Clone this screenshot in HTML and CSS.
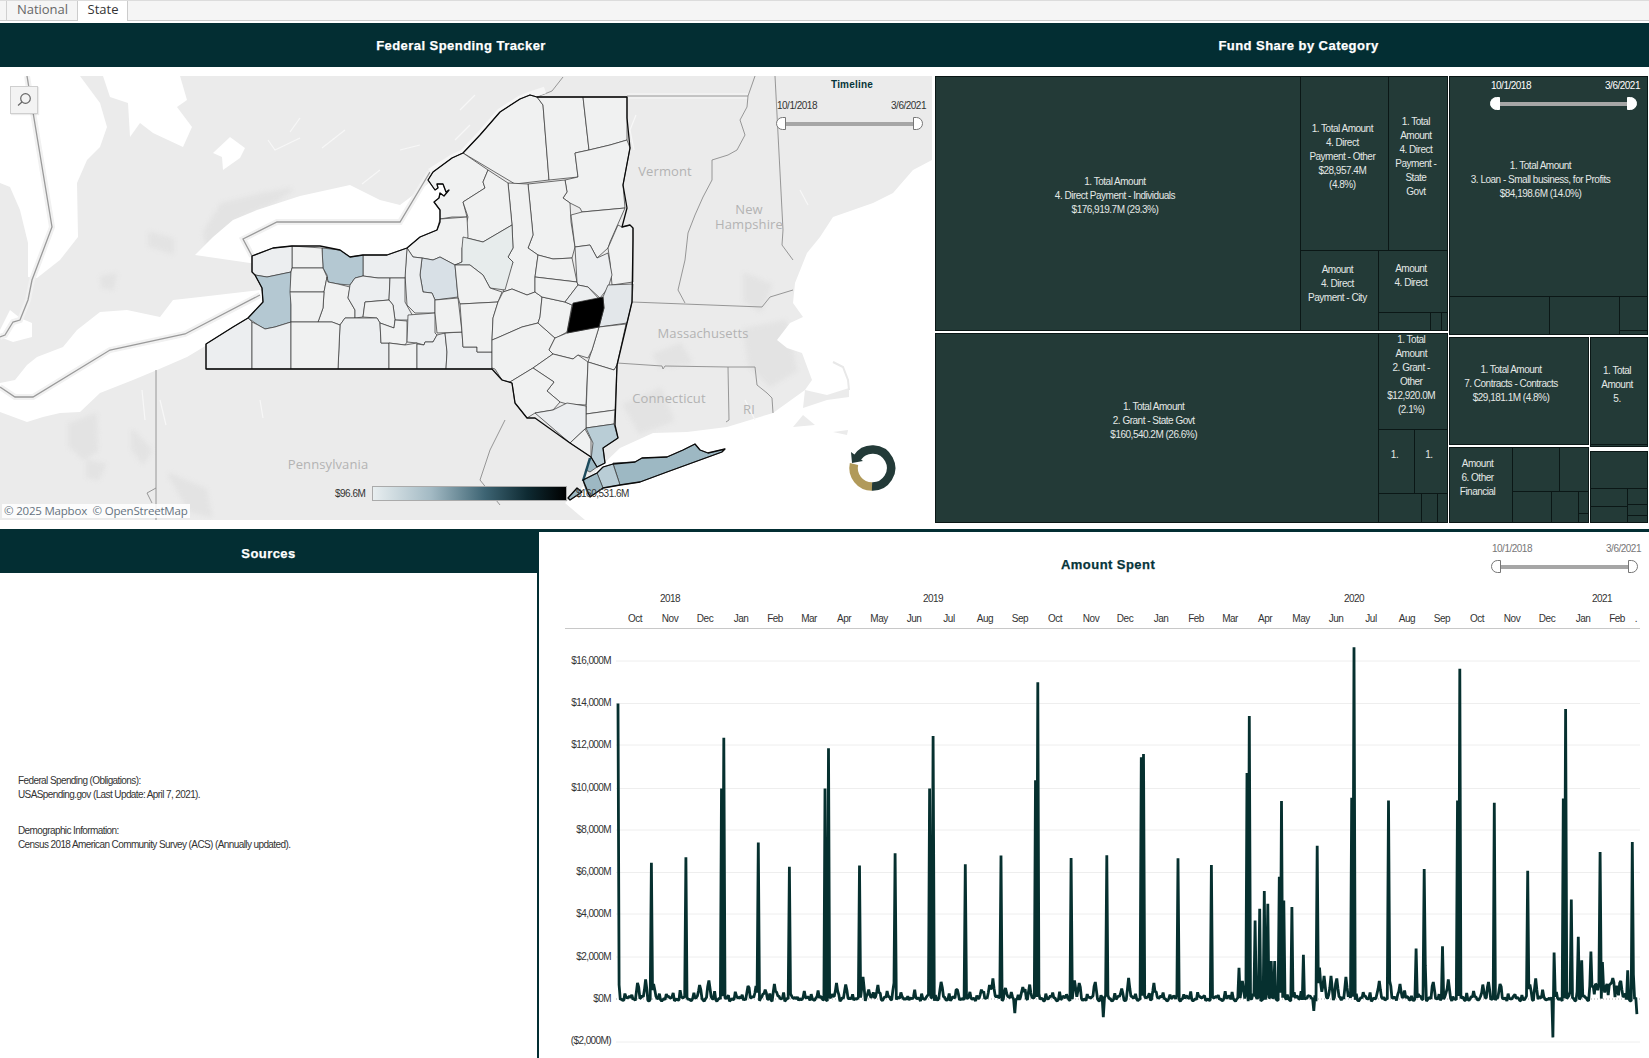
FILE: index.html
```html
<!DOCTYPE html>
<html lang="en">
<head>
    <meta charset="UTF-8">
    <meta name="viewport" content="width=device-width, initial-scale=1.0">
    <title>Federal Spending Tracker</title>
    <link rel="stylesheet" href="styles.css">
</head>
<body>
    <div class="tabs">
        <span class="tab-edge"></span>
        <a class="tab" href="#national">National</a>
        <a class="tab tab-active" href="#state">State</a>
    </div>

    <header class="top-header">
        <h2 class="title-left">Federal Spending Tracker</h2>
        <h2 class="title-right">Fund Share by Category</h2>
    </header>

    <div class="top-row">
        <div class="map-pane">
            <svg class="map" viewBox="0 76 932 444" width="932" height="444">
                <defs>
                    <path id="borderOntario" d="M252 256 243 239 277 222 400 222 430 172"/>
                    <path id="borderErie" d="M260 295 185 334 110 350 33 397 15 397 0 387"/>
                    <path id="borderHuron" d="M27 76 52 227 32 280 28 300 20 320 13 322 5 335 0 337"/>
                </defs>
                <rect class="land" x="0" y="76" width="932" height="444"/>

                <!-- darker patches on the land -->
                <g class="patches">
                    <path d="M205 232 222 205 262 195 290 190 270 203 240 216 222 232 208 248Z"/>
                    <path d="M150 234 172 240 172 252 150 245Z"/>
                    <path d="M102 278 115 275 112 288 103 286Z"/>
                    <path d="M70 425 95 415 96 450 84 458 70 445Z"/>
                    <path d="M133 432 150 450 143 462 133 448Z"/>
                    <path d="M88 462 104 465 98 478 88 476Z"/>
                    <path d="M170 475 205 490 210 515 190 510Z"/>
                    <path d="M625 405 660 390 672 420 640 432Z"/>
                    <path d="M745 330 785 322 795 370 770 385 750 365Z"/>
                    <path d="M745 275 770 285 760 310 745 300Z"/>
                    <path d="M655 355 680 345 690 362 660 366Z"/>
                </g>

                <!-- lakes and ocean -->
                <path class="water" d="M0 76 80 76 100 103 107 127 100 147 87 160 77 183 78 237 60 260 37 278 28 277 28 243 20 210 10 187 0 183Z"/>
                <path class="water" d="M103 76 110 97 128 103 130 137 140 123 153 133 183 147 192 127 177 107 187 100 180 76Z"/>
                <path class="water" d="M213 153 230 137 245 148 240 158 223 170 222 157Z"/>
                <path class="water" d="M195 255 213 237 233 220 257 210 300 196 350 185 380 200 400 205 420 190 435 178 445 172 450 200 445 235 410 258 330 258 250 263Z"/>
                <path class="water" d="M0 383 15 380 27 365 37 357 63 347 77 330 100 312 127 310 160 317 173 300 200 297 260 290 275 300 250 325 207 345 187 357 157 370 133 380 100 393 80 412 60 413 43 417 27 422 0 412Z"/>
                <path class="water" d="M0 330 10 310 20 318 32 323 32 337 13 342 0 337Z"/>
                <path class="water" d="M932 160 913 170 893 193 873 203 833 217 820 237 807 253 795 283 793 303 803 317 790 323 777 340 787 348 802 353 812 380 805 390 773 413 727 427 687 432 653 433 620 448 597 470 580 490 565 503 585 520 932 520Z"/>
                <path class="land" d="M805 390 827 395 849 388 849 397 827 400 803 408Z"/>
                <path class="land" d="M793 427 803 415 815 425Z"/>
                <path class="land" d="M833 432 848 430 847 435Z"/>
                <path class="cape" d="M833 362 843 367 848 380 849 390"/>

                <!-- small lakes and rivers up north -->
                <path class="river" d="M268 140 275 150 300 138 M300 118 290 132 M322 148 345 130 M362 184 380 170 M400 150 420 145 M455 140 470 125 M460 110 475 95"/>
                <path class="river" d="M260 400 263 418 M142 390 145 420 M160 400 166 425"/>
                <path class="river" d="M634 150 630 130 636 115 M808 205 800 190 M745 400 755 420"/>

                <!-- borders -->
                <use href="#borderOntario" class="halo"/>
                <use href="#borderErie" class="halo"/>
                <use href="#borderHuron" class="halo"/>
                <use href="#borderOntario" class="border"/>
                <use href="#borderErie" class="border"/>
                <use href="#borderHuron" class="border"/>
                <path class="halo" d="M627 96 748 96"/>
                <path class="border thin" d="M627 96 748 96 M755 76 748 96 747 107 740 120 745 135 737 150 728 155 712 160 712 180 703 197 695 215 688 233 685 260 678 290 685 303"/>
                <path class="border thin" d="M775 76 783 230 782 245 793 260 M632 302 762 307 770 297 793 290"/>
                <path class="border thin" d="M617 363 662 366 663 369 665 366 728 367 755 367 757 385 767 393 772 398 773 413 M728 367 729 420 726 422"/>
                <path class="border thin" d="M156 370 156 520 M156 488 147 493 152 503 M563 77 552 91 537 97 M430 172 452 158"/>
                <path class="border thin" d="M505 420 490 450 480 480 500 505"/>

                <!-- place names -->
                <text class="place" x="665" y="176">Vermont</text>
                <text class="place" x="749" y="214">New</text>
                <text class="place" x="749" y="229">Hampshire</text>
                <text class="place" x="703" y="338">Massachusetts</text>
                <text class="place" x="669" y="403">Connecticut</text>
                <text class="place" x="749" y="414">RI</text>
                <text class="place" x="328" y="469">Pennsylvania</text>

                <!-- new york counties -->
                <path class="state-halo" d="M430 172 452 158 463 153 480 135 500 112 520 99 530 95 545 90"/>
                <g class="counties">
                    <polygon points="463,153 480,135 500,112 520,99 530,95 537,97 543,105 549,180 515,184"/>
                    <polygon points="537,97 583,97 589,150 575,153 578,177 549,180 543,105"/>
                    <polygon points="583,97 627,97 627,118 627,140 610,145 589,150"/>
                    <polygon points="575,153 589,150 610,145 627,140 630,148 623,185 625,208 582,212 580,208 570,203 563,198 567,192 565,180 578,177"/>
                    <polygon points="528,184 565,180 567,192 563,198 570,203 571,222 575,247 572,258 553,259 538,255 528,248 533,235"/>
                    <polygon points="508,183 528,184 533,235 528,248 538,255 535,277 535,292 527,295 512,289 503,292 505,282 513,262 508,257 513,248 512,225"/>
                    <polygon points="463,153 488,170 483,182 485,188 463,202 467,217 452,217 440,219 440,210 434,202 439,198 440,193 444,196 449,190 446,192 443,184 437,184 438,188 435,190 428,180 433,172 452,158"/>
                    <polygon points="488,170 508,183 512,225 483,242 463,237 468,217 463,202 485,188 483,182"/>
                    <polygon points="440,219 467,217 468,237 462,248 462,262 455,265 440,257 433,260 422,258 413,257 407,248 420,237 437,230"/>
                    <polygon class="tint-pale" points="463,237 483,242 512,225 513,248 508,257 513,262 505,290 490,288 483,275 470,265 455,265 462,262 462,248"/>
                    <polygon class="tint-soft" points="422,258 433,260 440,257 455,265 458,297 435,300 432,293 423,292 420,275"/>
                    <polygon points="455,265 470,265 483,275 490,288 502,292 498,302 460,304 458,297"/>
                    <polygon class="tint-faint" points="407,248 413,257 422,258 420,275 423,292 432,293 435,300 435,313 415,313 407,305 405,275"/>
                    <polygon class="tint-faint" points="363,255 387,255 407,248 405,278 378,278 363,276"/>
                    <polygon class="tint-mid" points="322,248 340,250 350,257 363,255 363,276 355,278 350,285 338,284 328,282 327,275 323,268"/>
                    <polygon points="292,246 322,248 323,268 292,268"/>
                    <polygon class="tint-faint" points="252,256 273,248 292,246 292,268 291,272 267,277 255,275 252,272"/>
                    <polygon class="tint-mid" points="255,275 267,277 291,272 291,322 275,327 265,329 258,325 248,318 263,302 262,288"/>
                    <polygon points="292,268 323,268 327,277 324,292 290,292 291,272"/>
                    <polygon points="328,282 338,284 350,287 348,298 355,310 355,318 345,318 340,325 332,322 318,322 323,308 324,292 327,277"/>
                    <polygon points="290,292 324,292 323,308 318,322 291,322 291,305"/>
                    <polygon class="tint-faint" points="350,285 355,278 363,276 378,278 390,278 389,300 365,302 363,317 355,318 355,310 348,298"/>
                    <polygon class="tint-faint" points="390,278 405,278 405,302 415,320 395,320 393,305 389,300"/>
                    <polygon points="365,302 389,300 393,305 395,320 394,328 380,323 377,318 363,317"/>
                    <polygon class="tint-faint" points="345,318 377,318 380,323 381,343 389,343 389,369 338,369 340,325"/>
                    <polygon class="tint-faint" points="206,344 233,327 248,318 252,322 252,369 206,369"/>
                    <polygon class="tint-faint" points="252,322 258,325 265,329 275,327 291,322 291,369 252,369"/>
                    <polygon points="291,322 318,322 332,322 340,325 338,369 291,369"/>
                    <polygon points="380,323 394,328 395,320 407,321 407,342 405,345 389,343 381,343"/>
                    <polygon class="tint-faint" points="408,315 435,313 435,333 437,335 433,342 425,342 424,345 417,343 407,342"/>
                    <polygon points="389,343 405,345 417,343 417,369 389,369"/>
                    <polygon class="tint-faint" points="417,344 424,345 425,342 433,342 437,335 445,333 447,352 446,369 417,369"/>
                    <polygon class="tint-faint" points="445,333 462,332 463,347 477,347 477,352 492,352 492,369 446,369 447,352"/>
                    <polygon points="435,300 458,298 462,332 437,333 435,313"/>
                    <polygon points="460,304 498,302 493,318 492,340 492,352 477,352 477,347 463,347 462,332"/>
                    <polygon points="503,292 512,289 527,295 535,292 542,297 540,317 538,323 522,327 497,338 492,340 493,318 498,302"/>
                    <polygon points="492,340 497,338 522,327 538,323 555,338 549,350 553,354 533,368 510,382 502,380 495,369 492,368"/>
                    <polygon points="542,297 565,302 572,305 567,332 558,337 555,338 538,323 540,317"/>
                    <polygon points="538,255 553,259 572,258 577,282 535,277"/>
                    <polygon points="535,277 577,282 578,285 565,302 542,297 535,292"/>
                    <polygon points="571,215 582,212 625,208 610,242 608,248 597,258 590,245 575,247"/>
                    <polygon points="608,248 618,225 622,227 630,225 633,228 633,282 612,285 610,262"/>
                    <polygon class="tint-faint" points="575,247 590,245 597,258 608,253 612,275 608,288 600,298 588,287 578,285 577,282"/>
                    <polygon class="tint-faint" points="578,285 588,287 600,300 572,305 565,302"/>
                    <polygon class="tint-light" points="608,285 633,284 632,302 627,323 599,327 604,308 603,297"/>
                    <polygon points="599,327 626,324 617,365 614,370 588,362 592,350"/>
                    <polygon points="567,333 599,327 592,350 588,358 578,355 573,359 553,354 549,350 555,338"/>
                    <polygon points="553,354 573,359 578,355 588,362 586,405 567,404 560,402 547,391 554,382 533,368"/>
                    <polygon points="533,368 554,382 547,391 560,402 553,410 535,413 527,418 515,403 512,383 510,382"/>
                    <polygon points="588,362 614,370 617,365 615,410 586,414"/>
                    <polygon points="586,414 615,410 614,424 586,428"/>
                    <polygon class="tint-faint" points="535,413 553,410 567,403 586,406 586,428 570,443"/>
                    <polygon points="570,443 585,429 591,440 591,457"/>
                    <polygon class="tint-albany" points="573,303 603,297 604,308 599,327 567,333"/>
                    <polygon class="tint-west" points="586,428 614,424 618,438 603,448 605,463 597,467 591,460 593,443"/>
                    <polygon class="tint-island" points="695,444 700,450 708,453 725,449 722,452 667,472 640,482 620,485 613,463 635,462 642,458 667,457 683,450"/>
                    <polygon class="tint-west" points="603,467 613,464 620,485 603,488 597,473"/>
                    <polygon class="tint-island" points="583,480 597,473 603,488 590,497 586,490"/>
                    <polygon class="tint-island" points="591,457 597,467 590,472 586,470"/>
                    <polygon class="tint-island" points="568,498 577,488 582,492 570,500"/>
                </g>
                <path class="manhattan" d="M590 458 583 481"/>
                <path class="state-line" d="M627 97 537 97 530 95 520 99 500 112 480 135 463 153 452 158 433 172 428 180 435 190 438 188 437 184 443 184 446 192 449 190 444 196 440 193 439 198 434 202 440 210 440 222 437 230 420 237 407 248 387 255 363 255 350 257 340 250 320 246 292 246 273 248 252 256 252 272 255 275 262 288 263 302 248 318 233 327 206 344 206 369 492 369 502 380 512 383 515 403 527 418 535 418 570 443 591 457 597 467 605 463 603 448 618 438 615 425 617 365 632 302 633 240 633 228 630 225 622 227 627 208 623 185 630 148 627 118Z"/>
                <path class="state-line" d="M603 467 613 464 635 462 642 458 667 457 683 450 695 444 700 450 708 453 725 449 722 452 667 472 640 482 620 485 603 488 590 497 583 480 597 473Z"/>
                <path class="state-line" d="M568 498 577 488 582 492 570 500Z"/>
            </svg>

            <button class="map-search" type="button" aria-label="Search">
                <svg viewBox="0 0 16 16" width="16" height="16"><circle cx="9.5" cy="6.5" r="4.8"/><path d="M6 10 2 13.5"/></svg>
            </button>

            <div class="timeline-title">Timeline</div>
            <div class="range range-map">
                <div class="range-dates"><span>10/1/2018</span><span>3/6/2021</span></div>
                <div class="range-track"><span class="knob knob-left"></span><span class="bar"></span><span class="knob knob-right"></span></div>
            </div>

            <div class="legend">
                <span class="legend-min">$96.6M</span>
                <span class="legend-bar"></span>
                <span class="legend-max">$160,531.6M</span>
            </div>

            <svg class="refresh" viewBox="0 0 50 50" width="50" height="50">
                <path class="refresh-tan" d="M25 43.5A18.5 18.5 0 0 1 7 21"/>
                <path class="refresh-dark" d="M10 15A18.5 18.5 0 1 1 25 43.5"/>
                <path class="refresh-head" d="M4 9 16 18 5 20Z"/>
            </svg>

            <div class="attribution">© 2025 Mapbox  © OpenStreetMap</div>
        </div>

        <div class="treemap">
            <div class="tm-left">
                <div class="tm-block tm-row tm-first">
                    <div class="tm-cell tm-cell-big" style="flex:366"><span>1. Total Amount<br>4. Direct Payment - Individuals<br>$176,919.7M (29.3%)</span></div>
                    <div class="tm-col" style="flex:147">
                        <div class="tm-row" style="flex:175">
                            <div class="tm-cell tm-cell-narrow" style="flex:88"><span>1. Total Amount<br>4. Direct<br>Payment - Other<br>$28,957.4M<br>(4.8%)</span></div>
                            <div class="tm-cell tm-cell-narrow" style="flex:59"><span>1. Total<br>Amount<br>4. Direct<br>Payment -<br>State<br>Govt</span></div>
                        </div>
                        <div class="tm-row" style="flex:80">
                            <div class="tm-cell tm-cell-narrow" style="flex:78"><span>Amount<br>4. Direct<br>Payment - City</span></div>
                            <div class="tm-col" style="flex:69">
                                <div class="tm-cell tm-cell-narrow" style="flex:63"><span>Amount<br>4. Direct</span></div>
                                <div class="tm-row" style="flex:17">
                                    <div class="tm-cell" style="flex:53"></div>
                                    <div class="tm-cell" style="flex:11"></div>
                                    <div class="tm-cell" style="flex:5"></div>
                                </div>
                            </div>
                        </div>
                    </div>
                </div>
                <div class="tm-block tm-row tm-second">
                    <div class="tm-cell" style="flex:445"><span>1. Total Amount<br>2. Grant - State Govt<br>$160,540.2M (26.6%)</span></div>
                    <div class="tm-col" style="flex:68">
                        <div class="tm-cell tm-cell-narrow" style="flex:97"><span>1. Total<br>Amount<br>2. Grant -<br>Other<br>$12,920.0M<br>(2.1%)</span></div>
                        <div class="tm-row" style="flex:64">
                            <div class="tm-cell tm-cell-narrow" style="flex:36"><span>1.</span></div>
                            <div class="tm-cell tm-cell-narrow" style="flex:34"><span>1.</span></div>
                        </div>
                        <div class="tm-row" style="flex:29">
                            <div class="tm-cell" style="flex:44"></div>
                            <div class="tm-cell" style="flex:16"></div>
                            <div class="tm-cell" style="flex:10"></div>
                        </div>
                    </div>
                </div>
            </div>

            <div class="tm-right">
                <div class="tm-block tm-col tm-third">
                    <div class="tm-cell tm-cell-wide" style="flex:222"><span>1. Total Amount<br>3. Loan - Small business, for Profits<br>$84,198.6M (14.0%)</span></div>
                    <div class="tm-row" style="flex:37">
                        <div class="tm-cell" style="flex:101"></div>
                        <div class="tm-cell" style="flex:70"></div>
                        <div class="tm-col" style="flex:27">
                            <div class="tm-cell" style="flex:33"></div>
                            <div class="tm-cell" style="flex:3"></div>
                        </div>
                    </div>
                </div>
                <div class="tm-lower">
                    <div class="tm-lower-a">
                        <div class="tm-block tm-row tm-contracts">
                            <div class="tm-cell tm-cell-wide"><span>1. Total Amount<br>7. Contracts - Contracts<br>$29,181.1M (4.8%)</span></div>
                        </div>
                        <div class="tm-block tm-row tm-other">
                            <div class="tm-cell" style="flex:63"><span>Amount<br>6. Other<br>Financial</span></div>
                            <div class="tm-col" style="flex:76">
                                <div class="tm-row" style="flex:45">
                                    <div class="tm-cell" style="flex:47"></div>
                                    <div class="tm-cell" style="flex:29"></div>
                                </div>
                                <div class="tm-row" style="flex:31">
                                    <div class="tm-cell" style="flex:39"></div>
                                    <div class="tm-cell" style="flex:28"></div>
                                    <div class="tm-col" style="flex:9">
                                        <div class="tm-cell" style="flex:22"></div>
                                        <div class="tm-cell" style="flex:9"></div>
                                    </div>
                                </div>
                            </div>
                        </div>
                    </div>
                    <div class="tm-lower-b">
                        <div class="tm-block tm-col tm-five">
                            <div class="tm-cell tm-cell-narrow" style="flex:108"><span>1. Total<br>Amount<br>5.</span></div>
                            <div class="tm-cell" style="flex:1"></div>
                        </div>
                        <div class="tm-block tm-col tm-last">
                            <div class="tm-cell" style="flex:38"></div>
                            <div class="tm-row" style="flex:34">
                                <div class="tm-col" style="flex:37">
                                    <div class="tm-cell" style="flex:18"></div>
                                    <div class="tm-cell" style="flex:16"></div>
                                </div>
                                <div class="tm-col" style="flex:20">
                                    <div class="tm-cell" style="flex:16"></div>
                                    <div class="tm-cell" style="flex:11"></div>
                                    <div class="tm-cell" style="flex:7"></div>
                                </div>
                            </div>
                        </div>
                    </div>
                </div>
            </div>
            <div class="range range-tree">
                <div class="range-dates"><span>10/1/2018</span><span>3/6/2021</span></div>
                <div class="range-track"><span class="knob knob-left"></span><span class="bar"></span><span class="knob knob-right"></span></div>
            </div>
        </div>
    </div>

    <div class="bottom-row">
        <div class="sources">
            <h2 class="sources-title">Sources</h2>
            <div class="sources-body">
                <p>Federal Spending (Obligations):<br>USASpending.gov (Last Update: April 7, 2021).</p>
                <p>Demographic Information:<br>Census 2018 American Community Survey (ACS) (Annually updated).</p>
            </div>
        </div>

        <div class="spent">
            <div class="spent-head">
                <h2 class="spent-title">Amount Spent</h2>
                <div class="range range-chart">
                    <div class="range-dates"><span>10/1/2018</span><span>3/6/2021</span></div>
                    <div class="range-track"><span class="knob knob-left"></span><span class="bar"></span><span class="knob knob-right"></span></div>
                </div>
            </div>
            <svg class="chart" viewBox="539 575 1110 483" width="1110" height="483">
                <g class="years">
                    <text x="670" y="602">2018</text><text x="933" y="602">2019</text><text x="1354" y="602">2020</text><text x="1602" y="602">2021</text>
                </g>
                <g class="months">
                    <text x="635" y="622">Oct</text><text x="670" y="622">Nov</text><text x="705" y="622">Dec</text><text x="741" y="622">Jan</text><text x="775" y="622">Feb</text><text x="809" y="622">Mar</text><text x="844" y="622">Apr</text><text x="879" y="622">May</text><text x="914" y="622">Jun</text><text x="949" y="622">Jul</text><text x="985" y="622">Aug</text><text x="1020" y="622">Sep</text><text x="1055" y="622">Oct</text><text x="1091" y="622">Nov</text><text x="1125" y="622">Dec</text><text x="1161" y="622">Jan</text><text x="1196" y="622">Feb</text><text x="1230" y="622">Mar</text><text x="1265" y="622">Apr</text><text x="1301" y="622">May</text><text x="1336" y="622">Jun</text><text x="1371" y="622">Jul</text><text x="1407" y="622">Aug</text><text x="1442" y="622">Sep</text><text x="1477" y="622">Oct</text><text x="1512" y="622">Nov</text><text x="1547" y="622">Dec</text><text x="1583" y="622">Jan</text><text x="1617" y="622">Feb</text><text x="1636" y="622">.</text>
                </g>
                <path class="axis-line" d="M565 628.5H1640"/>
                <path class="grid" d="M616 661H1640M616 703.5H1640M616 745H1640M616 788.5H1640M616 830H1640M616 872.5H1640M616 914H1640M616 957H1640M616 1042H1640"/>
                <path class="zero" d="M616 999H1640"/>
                <g class="ticks">
                    <text x="611" y="664">$16,000M</text><text x="611" y="705.5">$14,000M</text><text x="611" y="748">$12,000M</text><text x="611" y="790.5">$10,000M</text><text x="611" y="833">$8,000M</text><text x="611" y="875">$6,000M</text><text x="611" y="917">$4,000M</text><text x="611" y="959.5">$2,000M</text><text x="611" y="1002">$0M</text><text x="611" y="1044">($2,000M)</text>
                </g>
                <path class="spend-line" id="spendLine"/>
            </svg>
        </div>
    </div>

    <script src="chart.js"></script>
</body>
</html>
```

FILE: styles.css
```css
* {
    margin: 0;
    padding: 0;
    box-sizing: border-box;
}

html, body {
    height: 1058px;
    overflow: hidden;
}

body {
    background-color: white;
    font-family: "Liberation Sans", Arial, sans-serif;
    font-size: 10px;
    letter-spacing: -0.5px;
    color: #333;
}

/* Tabs */
.tabs {
    display: flex;
    height: 21px;
    background-color: #f5f5f5;
    border-top: 1px solid #dcdcdc;
    border-bottom: 1px solid #ccc;
}

.tab-edge {
    width: 7px;
    border-right: 1px solid #d0d0d0;
}

.tab {
    display: block;
    width: 71px;
    height: 20px;
    padding-left: 1px;
    font-family: "Open Sans", sans-serif;
    font-size: 13px;
    line-height: 17px;
    letter-spacing: 0;
    text-align: center;
    text-decoration: none;
    color: #666;
    border-right: 1px solid #ccc;
}

.tab-active {
    width: 50px;
    background-color: white;
    color: #333;
}

/* Section headers */
.top-header {
    display: flex;
    margin-top: 2px;
    height: 44px;
    background-color: #032e33;
    color: white;
}

h2 {
    font-size: 13px;
    font-weight: bold;
    letter-spacing: 0.45px;
    text-align: center;
    -webkit-text-stroke: 0.25px currentColor;
}

.top-header h2 {
    line-height: 45px;
}

.title-left {
    flex: 0 0 922px;
}

.title-right {
    flex: 1;
    padding-left: 26px;
}

.top-row {
    display: flex;
    gap: 3px;
    height: 444px;
    margin-top: 9px;
}

/* Map */
.map-pane {
    position: relative;
    flex: 0 0 932px;
    height: 444px;
    overflow: hidden;
}

.map {
    display: block;
}

.land { fill: #ebebeb; }
.water { fill: white; }
.river { fill: none; stroke: #f7f7f7; stroke-width: 1.2; }
.cape { fill: none; stroke: #e8e8e8; stroke-width: 2; }
.halo { fill: none; stroke: #f1f1f1; stroke-width: 6; }
.state-halo { fill: none; stroke: #f6f6f6; stroke-width: 7; }
.border { fill: none; stroke: #9a9a9a; stroke-width: 1.3; }
.border.thin { stroke: #8c8c8c; stroke-width: 0.9; }

.patches {
    fill: #e3e3e3;
    stroke: #e3e3e3;
    stroke-width: 4;
    stroke-linejoin: round;
    filter: blur(2px);
}

.place {
    font-family: "Open Sans", sans-serif;
    font-size: 13px;
    letter-spacing: 0.1px;
    text-anchor: middle;
    fill: #b3b3b3;
}

.counties polygon {
    fill: #f0f1f1;
    stroke: #333;
    stroke-width: 0.7;
}

.counties .tint-faint { fill: #eceef0; }
.counties .tint-pale { fill: #e7ecec; }
.counties .tint-light { fill: #e3e7ea; }
.counties .tint-soft { fill: #d8e0e6; }
.counties .tint-west { fill: #b9cdd6; }
.counties .tint-mid { fill: #b4c8d2; }
.counties .tint-island { fill: #9db8c3; }
.counties .tint-albany { fill: #000; }

.state-line { fill: none; stroke: #0a0a0a; stroke-width: 1.3; stroke-linejoin: round; }
.manhattan { fill: none; stroke: #1d4a5c; stroke-width: 2.5; }

.map-search {
    position: absolute;
    left: 10px;
    top: 10px;
    width: 28px;
    height: 28px;
    display: flex;
    align-items: center;
    justify-content: center;
    background-color: #f3f3f3;
    border: 1px solid #cfcfcf;
    box-shadow: 1px 1px 1px rgba(0,0,0,0.08);
}

.map-search circle, .map-search path {
    fill: none;
    stroke: #666;
    stroke-width: 1.2;
}

.timeline-title {
    position: absolute;
    left: 772px;
    top: 2px;
    width: 160px;
    line-height: 14px;
    font-weight: bold;
    letter-spacing: 0.2px;
    text-align: center;
    color: #06343a;
}

/* Date range filter */
.range {
    width: 147px;
}

.range-dates {
    display: flex;
    justify-content: space-between;
    margin: 0 -3px 4px 1px;
    line-height: 14px;
}

.range-track {
    display: flex;
    align-items: center;
}

.knob {
    flex: 0 0 10px;
    height: 13px;
    background-color: white;
    border: 1px solid #777;
}

.knob-left { border-radius: 7px 0 0 7px; }
.knob-right { border-radius: 0 7px 7px 0; }

.bar {
    flex: 1;
    height: 4px;
    background-color: #a6a6a6;
}

.range-map {
    position: absolute;
    left: 776px;
    top: 23px;
}

.range-tree {
    position: absolute;
    left: 555px;
    top: 3px;
    color: white;
}

.range-tree .knob {
    border-color: white;
}

.range-chart {
    margin-left: auto;
    margin-right: 11px;
    color: #777;
}

/* Legend */
.legend {
    position: absolute;
    left: 335px;
    top: 410px;
    display: flex;
    align-items: center;
    line-height: 14px;
}

.legend-min {
    width: 37px;
}

.legend-bar {
    width: 195px;
    height: 15px;
    background: linear-gradient(to right, #e8eef0, #a3bac4 30%, #3d6473 58%, #0e2a32 80%, #000);
    border: 1px solid #aaa;
}

.legend-max {
    margin-left: 9px;
}

.refresh {
    position: absolute;
    left: 847px;
    top: 367px;
}

.refresh-tan, .refresh-dark {
    fill: none;
    stroke-width: 8.5;
}

.refresh-tan { stroke: #b19a5a; }
.refresh-dark { stroke: #233a38; }
.refresh-head { fill: #233a38; }

.attribution {
    position: absolute;
    left: 2px;
    bottom: 2px;
    padding: 0 2px;
    background-color: rgba(255,255,255,0.85);
    font-family: "Open Sans", sans-serif;
    font-size: 11.5px;
    letter-spacing: -0.2px;
    line-height: 14px;
    white-space: pre;
    color: #66737f;
}

/* Treemap */
.treemap {
    position: relative;
    display: flex;
    flex: 1;
    gap: 1px;
    height: 447px;
}

.tm-left {
    flex: 0 0 513px;
    display: flex;
    flex-direction: column;
    gap: 2px;
}

.tm-right {
    flex: 0 0 199px;
    display: flex;
    flex-direction: column;
    gap: 2px;
}

.tm-block {
    background-color: #0b1716;
    padding: 1px;
}

.tm-row, .tm-col {
    display: flex;
    gap: 1px;
    min-width: 0;
    min-height: 0;
    background-color: #0b1716;
}

.tm-col {
    flex-direction: column;
}

.tm-first { height: 255px; }
.tm-second { height: 190px; }
.tm-third { height: 259px; }

.tm-lower {
    display: flex;
    gap: 1px;
    height: 186px;
}

.tm-lower-a {
    flex: 0 0 140px;
    display: flex;
    flex-direction: column;
    gap: 2px;
}

.tm-lower-b {
    flex: 1;
    display: flex;
    flex-direction: column;
    gap: 4px;
}

.tm-contracts { height: 108px; }
.tm-other { height: 76px; }
.tm-five { height: 110px; }
.tm-last { height: 72px; }

.tm-cell {
    display: flex;
    align-items: center;
    justify-content: center;
    flex: 1;
    min-width: 0;
    min-height: 0;
    overflow: hidden;
    background-color: #233a37;
    color: #e4e8e6;
    line-height: 14px;
    text-align: center;
    white-space: nowrap;
}

.tm-cell span {
    flex: none;
    transform: translate(-3.5px, -7px);
}

.tm-cell-big span {
    transform: translate(-3px, -8px);
}

.tm-cell-wide span {
    transform: translate(-8px, -7px);
}

.tm-cell-narrow span {
    transform: translate(-2px, -6px);
}

/* Bottom row */
.bottom-row {
    display: flex;
    height: 529px;
    margin-top: 9px;
    border-top: 3px solid #032e33;
}

.sources {
    flex: 0 0 537px;
    display: flex;
    flex-direction: column;
}

.sources-title {
    height: 41px;
    line-height: 44px;
    background-color: #032e33;
    color: white;
}

.sources-body {
    flex: 1;
    display: flex;
    flex-direction: column;
    justify-content: center;
    gap: 22px;
    padding: 0 0 6px 18px;
    line-height: 14px;
    letter-spacing: -0.6px;
}

.spent {
    flex: 1;
    border-left: 2px solid #032e33;
}

.spent-head {
    display: flex;
    align-items: flex-start;
    height: 43px;
    padding-top: 10px;
}

.spent-title {
    margin: 15px 0 0 522px;
    line-height: 16px;
    color: #06343a;
}

.chart {
    display: block;
}

.years text, .months text {
    text-anchor: middle;
    fill: #333;
}

.ticks text {
    text-anchor: end;
    letter-spacing: -0.6px;
    fill: #333;
}

.axis-line { stroke: #c8c8c8; stroke-width: 1; }
.grid { stroke: #eee; stroke-width: 1; }
.zero { stroke: #aaa; stroke-width: 1; stroke-dasharray: 1 2; }

.spend-line {
    fill: none;
    stroke: #06302f;
    stroke-width: 2.8;
    stroke-linejoin: bevel;
}
```

FILE: chart.js
```javascript
// Daily spending, drawn from the known peaks. Values are page pixels on the chart.
const startX = 618;
const dayWidth = 1.15;
const dayCount = 887;
const baseY = 998.5;

const spikes = [
    [651.8, 862.7], [685.7, 857.3], [721.6, 788.6], [723.9, 737.7], [757.9, 842.5],
    [789.6, 866.7], [825.2, 788.6], [827.9, 748.2], [859.6, 865.4], [895.7, 853.2],
    [930, 788.6], [932.9, 736], [965.7, 864.3], [1001.4, 855.6], [1035, 780.2],
    [1037.9, 682.2], [1071.4, 858], [1106.9, 855.3], [1141.5, 757.3], [1144, 753.9],
    [1177.6, 858.3], [1211.9, 865], [1239.4, 967.7], [1246.5, 773.1], [1249, 715.9],
    [1255.4, 920.6], [1260.1, 908.8], [1264.7, 891], [1267.2, 903.7], [1271.1, 961],
    [1274.4, 961], [1279.7, 876.8], [1281.9, 801], [1284.4, 900.4], [1291.5, 907.1],
    [1303.3, 954.9], [1317.6, 845.8], [1351.5, 797.7], [1354, 647.2], [1388, 800.4],
    [1415.8, 948.5], [1424, 869], [1425.4, 965.4], [1442.6, 946.2], [1457, 800.4],
    [1460, 668.7], [1494, 802.7], [1527.9, 870.7], [1554, 952.6], [1563.4, 798.4],
    [1565.8, 709.1], [1571.1, 899.4], [1578.3, 936.7], [1581.9, 960.3], [1590.8, 951.6],
    [1599.7, 851.9], [1601.9, 962], [1627.2, 970.4], [1631.9, 842.1], [1634, 974.5],
    [1014.6, 1013.2], [1102.9, 1017.2], [1313.6, 1010.8], [1553, 1037.4]
];

const bumps = [
    [637.1, 982.9], [645.4, 979.5], [653.9, 984], [699.6, 985], [708.6, 980.5],
    [747.9, 986], [755.7, 986], [765.7, 989.6], [774.3, 984], [836.4, 983],
    [845.4, 984.6], [862.9, 977], [868.6, 989.6], [877.5, 985], [893.6, 983],
    [941.4, 981.9], [956.8, 989.6], [981.8, 989.6], [988.9, 985], [992.9, 978.5],
    [1005, 988], [1022.9, 987], [1030, 984.6], [1074.6, 980.5], [1079, 983],
    [1095.4, 982], [1121.9, 988.6], [1128.6, 977.8], [1154, 983], [1241.9, 981],
    [1319.7, 967.7], [1324, 976], [1330.8, 976], [1337.2, 978.5], [1346.1, 977],
    [1379, 981], [1390, 981], [1400.4, 984], [1433.6, 982], [1448, 979.5],
    [1482.6, 984.6], [1488.3, 982], [1499.7, 984], [1530, 984.6], [1536.1, 978.5],
    [1613, 978], [1621.1, 981]
];

const dayOf = (x) => Math.round((x - startX) / dayWidth);

// Small repeating wobble along the baseline
const values = [];
for (let i = 0; i < dayCount; i++) {
    const wobble = Math.sin(i * 1.7) * 1.2 + Math.sin(i * 0.53) * 1.6;
    const blip = i % 6 === 0 ? -3 - (i % 5) : 0;
    values.push(baseY + wobble + blip);
}

// The stretch from 2021 sits a little above zero
for (let i = dayOf(1590); i < dayOf(1622); i++) {
    values[i] -= i % 3 === 0 ? 2 : 13;
}

bumps.forEach(([x, y]) => {
    const day = dayOf(x);
    values[day] = y;
    values[day - 1] = (y + values[day - 1]) / 2;
    values[day + 1] = (y + values[day + 1]) / 2;
});

spikes.forEach(([x, y]) => {
    values[dayOf(x)] = y;
});

values[0] = 703.4;
values[1] = 985;
values[dayCount - 1] = 1014.2;

const path = values.map((y, i) => {
    const x = startX + i * dayWidth;
    return (i === 0 ? 'M' : 'L') + x.toFixed(1) + ' ' + y.toFixed(1);
}).join(' ');

document.getElementById('spendLine').setAttribute('d', path);
```
